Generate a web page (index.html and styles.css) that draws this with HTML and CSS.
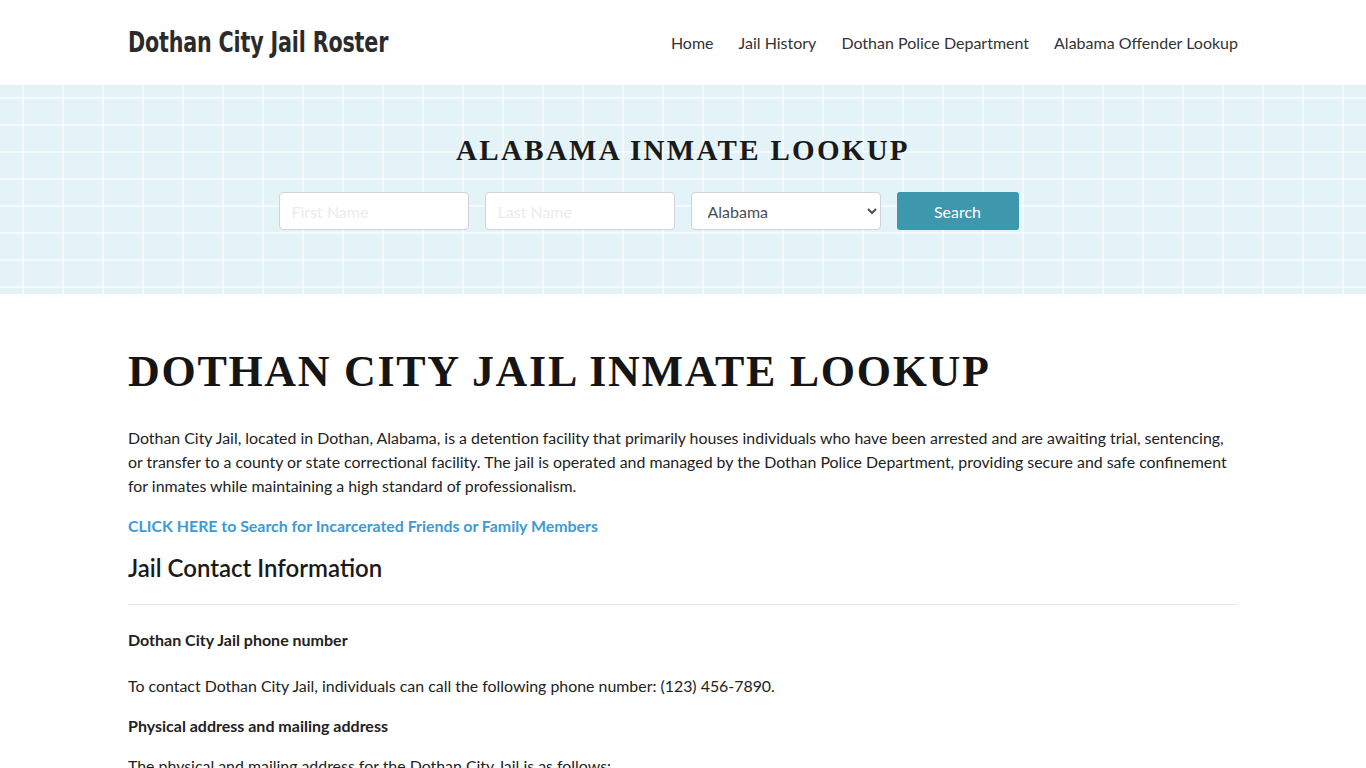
FILE: index.html
```html
<!DOCTYPE html>
<html lang="en">
<head>
<meta charset="utf-8">
<title>Dothan City Jail Roster</title>
<link rel="stylesheet" href="styles.css">
</head>
<body>
<header class="site-header">
  <div class="container header-inner">
    <a class="logo" href="#">Dothan City Jail Roster</a>
    <nav class="nav">
      <a href="#">Home</a>
      <a href="#">Jail History</a>
      <a href="#">Dothan Police Department</a>
      <a href="#">Alabama Offender Lookup</a>
    </nav>
  </div>
</header>
<section class="hero">
  <h2 class="hero-title">ALABAMA INMATE LOOKUP</h2>
  <form class="search">
    <input class="field" type="text" placeholder="First Name">
    <input class="field" type="text" placeholder="Last Name">
    <select class="field select"><option>Alabama</option></select>
    <button class="btn" type="button">Search</button>
  </form>
</section>
<main class="container content">
  <h1 class="page-title">DOTHAN CITY JAIL INMATE LOOKUP</h1>
  <p>Dothan City Jail, located in Dothan, Alabama, is a detention facility that primarily houses individuals who have been arrested and are awaiting trial, sentencing, or transfer to a county or state correctional facility. The jail is operated and managed by the Dothan Police Department, providing secure and safe confinement for inmates while maintaining a high standard of professionalism.</p>
  <p><a class="cta" href="#">CLICK HERE to Search for Incarcerated Friends or Family Members</a></p>
  <h2 class="section-title">Jail Contact Information</h2>
  <hr class="rule">
  <h3 class="sub">Dothan City Jail phone number</h3>
  <p>To contact Dothan City Jail, individuals can call the following phone number: (123) 456-7890.</p>
  <h3 class="sub sub2">Physical address and mailing address</h3>
  <p>The physical and mailing address for the Dothan City Jail is as follows:</p>
</main>
</body>
</html>
```
FILE: styles.css
```css
* { box-sizing: border-box; }
html, body { margin: 0; padding: 0; }
body {
  font-family: Lato, "Open Sans", sans-serif;
  font-size: 15.9px;
  line-height: 24px;
  color: #222;
  background: #fff;
}
.container {
  width: 1110px;
  margin: 0 auto;
}
.site-header { height: 85px; background: #fff; }
.header-inner {
  height: 85px;
  display: flex;
  align-items: center;
  justify-content: space-between;
}
.logo {
  font-family: "DejaVu Sans Condensed", "DejaVu Sans", sans-serif;
  font-stretch: condensed;
  font-weight: bold;
  font-size: 28px;
  color: #2b2b2b;
  text-decoration: none;
  letter-spacing: -0.2px;
  display: inline-block;
  transform: scaleX(0.82);
  transform-origin: left center;
  white-space: nowrap;
}
.nav { display: flex; gap: 25px; }
.nav a {
  color: #333;
  text-decoration: none;
  font-size: 16px;
}
.hero {
  height: 209px;
  background-color: #e3f3f7;
  background-image:
    repeating-linear-gradient(90deg, transparent 0 22px, rgba(255,255,255,0.6) 22px 24px, transparent 24px 40px),
    repeating-linear-gradient(180deg, transparent 0 12px, rgba(255,255,255,0.6) 12px 14px, transparent 14px 27px);
  display: flex;
  flex-direction: column;
  align-items: center;
  padding-top: 48px;
}
.hero-title {
  margin: 0;
  font-family: "Liberation Serif", "Times New Roman", serif;
  font-weight: bold;
  font-size: 29px;
  line-height: 34px;
  letter-spacing: 2.3px;
  color: #1a1a1a;
}
.search {
  display: flex;
  gap: 16px;
  margin-top: 25px;
  padding-right: 69px;
}
.field {
  width: 190px;
  height: 38px;
  border: 1px solid #ced4da;
  border-radius: 4px;
  background: #fff;
  font-family: Lato, sans-serif;
  font-size: 16px;
  padding: 0 12px;
  color: #495057;
}
.field::placeholder { color: #ececec; opacity: 1; }
.select { padding-left: 12px; }
.btn {
  width: 122px;
  height: 38px;
  border: none;
  border-radius: 3px;
  background: #3d97ad;
  color: #fff;
  font-family: Lato, sans-serif;
  font-size: 16px;
}
.content { padding-top: 52px; }
.page-title {
  margin: 0 0 28px;
  font-family: "Liberation Serif", "Times New Roman", serif;
  font-weight: bold;
  font-size: 44px;
  line-height: 52px;
  letter-spacing: 1.7px;
  color: #151515;
}
.content p { margin: 0 0 16px; }
.cta {
  color: #3d9ad6;
  font-weight: bold;
  text-decoration: none;
}
.section-title {
  margin: 0;
  font-size: 24px;
  line-height: 28px;
  font-weight: 600;
  color: #1a1a1a;
}
.rule {
  border: 0;
  border-top: 1px solid #e8e8e8;
  margin: 22px 0 23px;
}
.sub {
  margin: 0 0 22px;
  font-size: 16px;
  font-weight: bold;
  line-height: 24px;
}
.sub2 { margin-bottom: 16px; }
```
